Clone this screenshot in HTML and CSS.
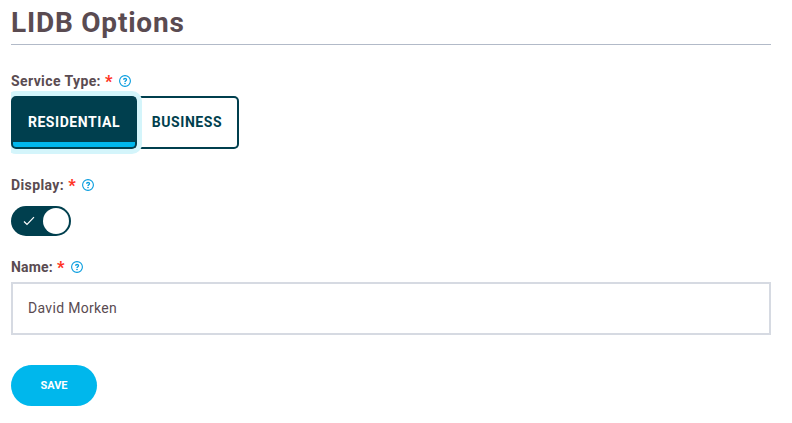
FILE: index.html
```
<!DOCTYPE html>
<html lang="en">
<head>
    <meta charset="UTF-8">
    <meta name="viewport" content="width=device-width, initial-scale=1.0">
    <title>LIDB Options</title>
    <link rel="stylesheet" href="styles.css">
</head>
<body>
    <svg class="sprite" width="0" height="0">
        <symbol id="help" viewBox="0 0 12 12">
            <circle cx="6" cy="6" r="5.4" fill="none" stroke="currentColor" stroke-width="1.1"/>
            <path d="M4.6 4.8C4.6 3.1 7.5 3.1 7.5 4.7C7.5 5.7 6 5.7 6 7" fill="none" stroke="currentColor" stroke-width="1.3"/>
            <circle cx="6" cy="8.5" r="0.8" fill="currentColor"/>
        </symbol>
    </svg>

    <form class="container">
        <h1 class="title">LIDB Options</h1>

        <div class="field service">
            <div class="label">Service Type: <span class="required">*</span> <svg class="help"><use href="#help"/></svg></div>
            <div class="btn-group">
                <button type="button" class="option active">RESIDENTIAL</button>
                <button type="button" class="option">BUSINESS</button>
            </div>
        </div>

        <div class="field display">
            <div class="label">Display: <span class="required">*</span> <svg class="help"><use href="#help"/></svg></div>
            <div class="toggle">
                <svg class="check" viewBox="0 0 12 10"><path d="M1 5.5L4 8.5L11 1.2" fill="none" stroke="#fff" stroke-width="1.2"/></svg>
                <span class="knob"></span>
            </div>
        </div>

        <div class="field name">
            <label class="label" for="name">Name: <span class="required">*</span> <svg class="help"><use href="#help"/></svg></label>
            <input type="text" id="name" name="name" value="David Morken">
        </div>

        <button type="submit" class="save">SAVE</button>
    </form>
</body>
</html>
```
FILE: styles.css
```
* { margin: 0; padding: 0; box-sizing: border-box; }

body {
    font-family: Roboto, 'Liberation Sans', sans-serif;
    background: #fff;
    color: #5a4b51;
}

.sprite { display: block; }

.container {
    margin: 0 21px 0 11px;
    overflow: hidden;
}

.title {
    height: 45px;
    padding-top: 4px;
    border-bottom: 1px solid #b2bac8;
    font-size: 28px;
    line-height: 38px;
    font-weight: 700;
    letter-spacing: 0.78px;
}

.label {
    display: flex;
    align-items: center;
    height: 20px;
    font-size: 14px;
    font-weight: 700;
    letter-spacing: 0.4px;
}

.required {
    width: 7px;
    margin-left: 4px;
    color: #ff3224;
    font-size: 16px;
    font-weight: 900;
    letter-spacing: 0;
}

.help {
    width: 12px;
    height: 12px;
    margin-left: 7px;
    color: #079cde;
}

.service { padding-top: 26px; }

.service .label { margin-bottom: 5px; }

.btn-group {
    display: flex;
    height: 53px;
}

.option {
    width: 104px;
    margin-left: -2px;
    padding: 0 0 2px 2px;
    border: 2px solid #003f4e;
    border-left: 0;
    border-radius: 0 5px 5px 0;
    background: #fff;
    color: #003f4e;
    font-family: inherit;
    font-size: 14px;
    font-weight: 700;
    letter-spacing: 0.55px;
}

.option.active {
    position: relative;
    width: 126px;
    margin-left: 0;
    padding-left: 0;
    border-left: 2px solid #003f4e;
    border-radius: 5px;
    background: linear-gradient(#003f4e 44px, #00b7ec 44px);
    color: #fff;
    box-shadow: 0 0 0 5px #d4f5fb;
}

.display { padding-top: 26px; }

.toggle {
    display: flex;
    align-items: center;
    justify-content: space-between;
    width: 60px;
    height: 30px;
    margin-top: 11px;
    padding: 0 2px 0 12px;
    border-radius: 15px;
    background: #003f4e;
}

.check {
    width: 12px;
    height: 10px;
}

.knob {
    width: 26px;
    height: 26px;
    border-radius: 50%;
    background: #fff;
}

.name { padding-top: 21px; }

.name .label { letter-spacing: 0.2px; }

.name input {
    display: block;
    width: 100%;
    height: 53px;
    margin-top: 5px;
    padding: 0 15px 2px;
    border: 2px solid #d6dae2;
    background: #fff;
    color: #5a4b51;
    font-family: inherit;
    font-size: 14px;
    letter-spacing: 0.32px;
}

.save {
    display: block;
    width: 86px;
    height: 41px;
    margin-top: 30px;
    border: 0;
    border-radius: 21px;
    background: #00b7ec;
    color: #fff;
    font-family: inherit;
    font-size: 11px;
    font-weight: 700;
}
```
